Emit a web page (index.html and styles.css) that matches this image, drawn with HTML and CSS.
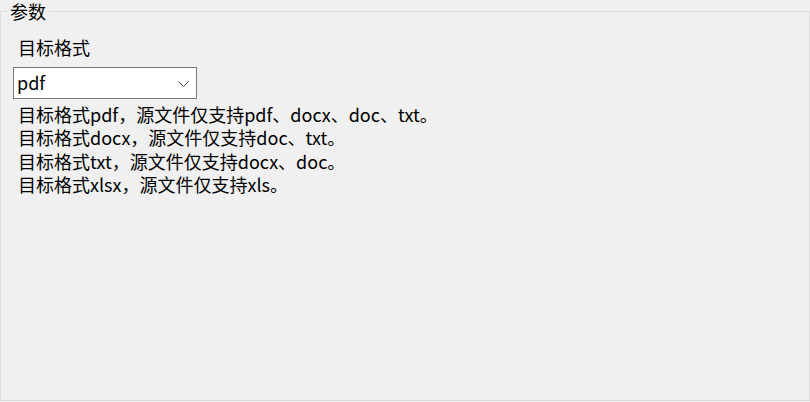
FILE: index.html
```html
<!DOCTYPE html>
<html lang="zh-CN">
<head>
<meta charset="utf-8">
<title>参数</title>
<link rel="stylesheet" href="styles.css">
</head>
<body>
<fieldset class="group">
  <legend class="group-title">参数</legend>
  <div class="group-body">
    <div class="field-label">目标格式</div>
    <div class="combo">
      <span class="combo-value">pdf</span>
      <svg class="combo-arrow" width="11" height="6" viewBox="0 0 11 6"><path d="M0.5 0.5 L5.5 5.5 L10.5 0.5" fill="none" stroke="#404040" stroke-width="1"/></svg>
    </div>
    <div class="notes">
      <div class="note">目标格式pdf，源文件仅支持pdf、docx、doc、txt。</div>
      <div class="note">目标格式docx，源文件仅支持doc、txt。</div>
      <div class="note">目标格式txt，源文件仅支持docx、doc。</div>
      <div class="note">目标格式xlsx，源文件仅支持xls。</div>
    </div>
  </div>
</fieldset>
</body>
</html>
```
FILE: styles.css
```css
html, body {
  margin: 0;
  padding: 0;
  background: #f0f0f0;
  width: 810px;
  height: 402px;
  overflow: hidden;
}
body {
  font-family: "Noto Sans CJK SC", "Noto Sans", sans-serif;
  font-size: 18px;
  line-height: 23px;
  color: #000;
}
.group {
  margin: 0;
  padding: 0;
  width: 810px;
  height: 401px;
  box-sizing: border-box;
  border: 1px solid #dcdcdc;
  min-width: 0;
}
.group-title {
  margin-left: 6px;
  padding: 0 3px;
  line-height: 23px;
}
.group-body {
  padding-left: 12px;
}
.field-label {
  margin-top: 13px;
  margin-left: 5px;
}
.combo {
  margin-top: 7.5px;
  width: 184px;
  height: 32px;
  box-sizing: border-box;
  border: 1px solid #7a7a7a;
  background: #fff;
  display: flex;
  align-items: center;
  justify-content: space-between;
  padding: 0 7px 0 3px;
}
.combo-value {
  line-height: 23px;
}
.combo-arrow {
  display: block;
  margin-top: 2px;
}
.notes {
  margin-top: 4.5px;
  margin-left: 5px;
}
.note {
  line-height: 23.3px;
}
```
